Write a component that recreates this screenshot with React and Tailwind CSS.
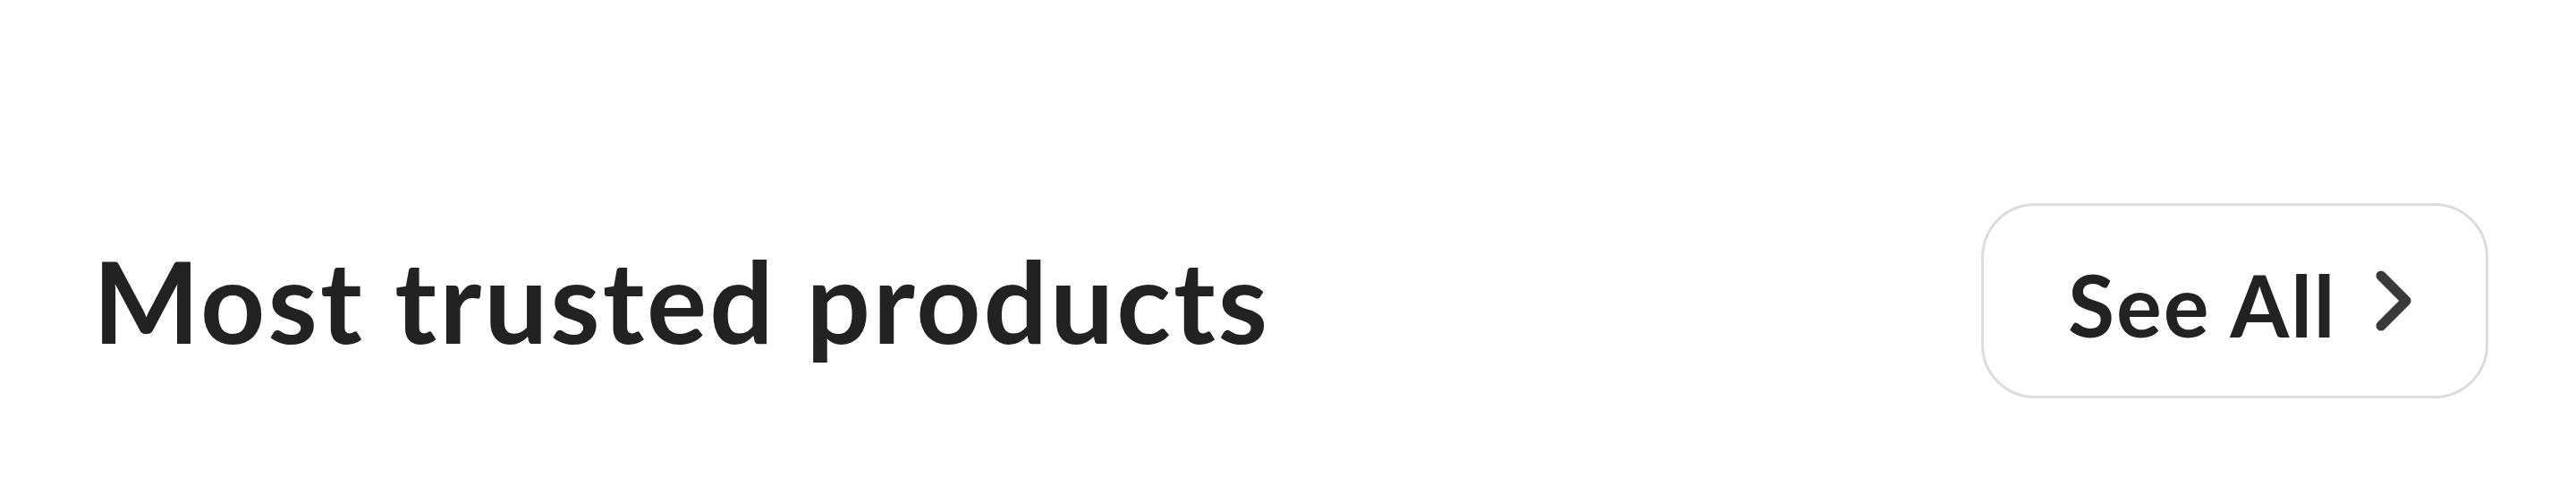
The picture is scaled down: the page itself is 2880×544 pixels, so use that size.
import React from "react";

function ChevronRight(p) {
  return (
    <svg viewBox="0 0 40 68" fill="none" {...p}>
      <path
        d="M6 6l28 28L6 62"
        stroke="currentColor"
        strokeWidth="11"
        strokeLinecap="round"
        strokeLinejoin="round"
      />
    </svg>
  );
}

export default function App() {
  return (
    <div className="h-[544px] w-full bg-white font-['Lato','Noto_Sans',sans-serif]">
      <div className="flex w-full items-center justify-between pl-[104px] pr-[98px] pt-[227px] pb-[99px]">
        <h2 className="whitespace-nowrap text-[126px] font-bold leading-none tracking-[3px] text-[#222222]">
          Most trusted products
        </h2>
        <a
          href="#"
          className="flex h-[218px] w-[567px] shrink-0 items-center whitespace-nowrap rounded-[60px] border-[3px] border-[#dcdcdc] pl-[94px] text-[#222222]"
        >
          <span className="pt-[8px] text-[95px] font-bold leading-none tracking-[2px]">See All</span>
          <ChevronRight className="ml-[44px] h-[68px] w-[40px] shrink-0 text-[#3a3a3a]" />
        </a>
      </div>
    </div>
  );
}
